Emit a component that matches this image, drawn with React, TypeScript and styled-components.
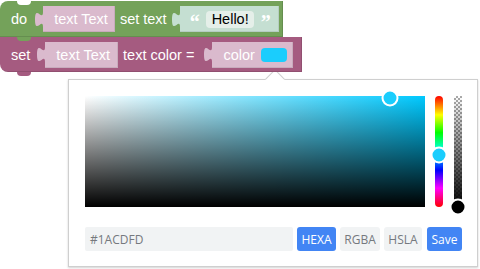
import React from 'react';
import styled, { createGlobalStyle } from 'styled-components';

const Global = createGlobalStyle`
  html, body { margin: 0; padding: 0; background: #fff; }
  body { font-family: "Liberation Sans", Arial, sans-serif; }
`;

const Page = styled.div`
  width: 480px;
  height: 269px;
  overflow: hidden;
  padding-top: 1px;
  box-sizing: border-box;
  display: flex;
  flex-direction: column;
  align-items: flex-start;
`;

const Block = styled.div<{ $bg: string; $w: number; $h: number; $top?: boolean; $z: number }>`
  position: relative;
  z-index: ${p => p.$z};
  display: flex;
  align-items: center;
  box-sizing: border-box;
  width: ${p => p.$w}px;
  height: ${p => p.$h}px;
  padding-left: 11px;
  background: ${p => p.$bg};
  border-radius: ${p => (p.$top ? '8px 0 0 0' : '0 0 0 8px')};
  box-shadow: inset -1px -1px 0 rgba(0, 0, 0, 0.12);
  &::before {
    content: '';
    display: ${p => (p.$top ? 'block' : 'none')};
    position: absolute;
    top: 0;
    left: 17px;
    width: 14px;
    height: 4px;
    background: #fff;
    border-radius: 0 0 6px 6px;
  }
  &::after {
    content: '';
    position: absolute;
    bottom: -4px;
    left: 17px;
    width: 14px;
    height: 4px;
    background: ${p => p.$bg};
    border-radius: 0 0 6px 6px;
  }
`;

const Label = styled.span<{ $ml?: number }>`
  margin-left: ${p => p.$ml ?? 0}px;
  color: #fff;
  font-size: 14.5px;
  white-space: pre;
  line-height: 16px;
`;

const Slot = styled.div<{ $ml: number }>`
  display: flex;
  align-items: center;
  margin-left: ${p => p.$ml}px;
`;

const SlotBody = styled.div<{ $bg: string; $pl: number; $pr: number }>`
  display: flex;
  align-items: center;
  height: 26px;
  box-sizing: border-box;
  padding: 0 ${p => p.$pr}px 0 ${p => p.$pl}px;
  background: ${p => p.$bg};
  box-shadow: inset -1px -1px 0 rgba(0, 0, 0, 0.08);
`;

const Quote = styled.span<{ $ml?: number }>`
  margin-left: ${p => p.$ml ?? 0}px;
  color: #fff;
  font-size: 20px;
  font-weight: bold;
  line-height: 16px;
  font-family: "Liberation Serif", serif;
  transform: translateY(3px);
`;

const Field = styled.span`
  margin-left: 6px;
  height: 17px;
  padding: 0 5px 0 6px;
  display: flex;
  align-items: center;
  background: #e5efe9;
  border-radius: 4px;
  color: #000;
  font-size: 14.5px;
`;

const Swatch = styled.span<{ $color: string }>`
  margin-left: 6px;
  width: 26px;
  height: 14px;
  border-radius: 4px;
  background: ${p => p.$color};
`;

const Popover = styled.div`
  position: relative;
  margin: 7px 0 0 68px;
  width: 410px;
  height: 188px;
  box-sizing: border-box;
  padding: 16px 15px 15px 16px;
  background: #fff;
  border: 1px solid #cfcfcf;
  box-shadow: 0 1px 2px rgba(0, 0, 0, 0.18);
  display: flex;
  flex-direction: column;
  font-family: "Open Sans", "Noto Sans", sans-serif;
`;

const Arrow = styled.div`
  position: absolute;
  top: -8px;
  left: 199px;
  width: 13px;
  height: 13px;
  background: #fff;
  border-top: 1px solid #cfcfcf;
  border-left: 1px solid #cfcfcf;
  transform: rotate(45deg);
`;

const PickerRow = styled.div`
  display: flex;
  height: 111px;
`;

const Palette = styled.div<{ $hue: number }>`
  position: relative;
  flex: 1;
  background: linear-gradient(to top, #000, rgba(0, 0, 0, 0)),
    linear-gradient(to right, #fff, hsl(${p => p.$hue}, 100%, 50%));
`;

const HueBar = styled.div`
  position: relative;
  width: 8px;
  margin-left: 10px;
  border-radius: 4px;
  background: linear-gradient(
    to bottom,
    #f00 0%,
    #ff0 17%,
    #0f0 33%,
    #0ff 50%,
    #00f 67%,
    #f0f 83%,
    #f00 100%
  );
`;

const AlphaBar = styled.div`
  position: relative;
  width: 8px;
  margin-left: 11px;
  background: linear-gradient(to bottom, rgba(0, 0, 0, 0), #000),
    conic-gradient(#aaa 25%, #fff 0 50%, #aaa 0 75%, #fff 0) 0 0 / 4px 4px;
`;

const Knob = styled.div<{ $color: string; $size: number }>`
  position: absolute;
  width: ${p => p.$size}px;
  height: ${p => p.$size}px;
  box-sizing: border-box;
  border-radius: 50%;
  border: 2px solid #fff;
  background: ${p => p.$color};
  transform: translate(-50%, -50%);
`;

const ControlRow = styled.div`
  display: flex;
  align-items: stretch;
  height: 24px;
  margin-top: 20px;
`;

const ResultInput = styled.div`
  flex: 1;
  display: flex;
  align-items: center;
  padding-left: 5px;
  background: #f1f3f4;
  border-radius: 2px;
  color: #75797e;
  font-size: 12px;
`;

const Btn = styled.div<{ $active?: boolean; $w: number; $ml: number }>`
  width: ${p => p.$w}px;
  margin-left: ${p => p.$ml}px;
  display: flex;
  align-items: center;
  justify-content: center;
  border-radius: 3px;
  font-size: 12px;
  background: ${p => (p.$active ? '#4285f4' : '#f1f3f4')};
  color: ${p => (p.$active ? '#fff' : '#75797e')};
`;

const Tab = ({ fill }: { fill: string }) => (
  <svg width="8" height="15" viewBox="0 0 8 15" style={{ display: 'block' }}>
    <path d="M8,0 C8,10 0,-8 0,7.5 C0,23 8,5 8,15 Z" fill={fill} />
  </svg>
);

const GREEN = '#74a25a';
const PINK = '#a55b80';
const LIGHT_PINK = '#dabacd';
const LIGHT_GREEN = '#c5dfd2';
const COLOR = '#1ACDFD';

// HSV of the current colour
const r = 0x1a / 255, g = 0xcd / 255, b = 0xfd / 255;
const max = Math.max(r, g, b), min = Math.min(r, g, b);
const hue = 60 * (4 + (r - g) / (max - min));
const sat = (max - min) / max;
const val = max;

export default function App() {
  return (
    <>
      <Global />
      <Page>
        <Block $bg={GREEN} $w={283} $h={36} $top $z={2}>
          <Label>do</Label>
          <Slot $ml={8}>
            <Tab fill={LIGHT_PINK} />
            <SlotBody $bg={LIGHT_PINK} $pl={11} $pr={7}>
              <Label>text Text</Label>
            </SlotBody>
          </Slot>
          <Label $ml={5}>set text</Label>
          <Slot $ml={5}>
            <Tab fill={LIGHT_GREEN} />
            <SlotBody $bg={LIGHT_GREEN} $pl={10} $pr={8}>
              <Quote>“</Quote>
              <Field>Hello!</Field>
              <Quote $ml={7}>”</Quote>
            </SlotBody>
          </Slot>
        </Block>
        <Block $bg={PINK} $w={302} $h={35} $z={1}>
          <Label>set</Label>
          <Slot $ml={7}>
            <Tab fill={LIGHT_PINK} />
            <SlotBody $bg={LIGHT_PINK} $pl={11} $pr={8}>
              <Label>text Text</Label>
            </SlotBody>
          </Slot>
          <Label $ml={5}>text color =</Label>
          <Slot $ml={10}>
            <Tab fill={LIGHT_PINK} />
            <SlotBody $bg={LIGHT_PINK} $pl={11} $pr={6}>
              <Label>color</Label>
              <Swatch $color={COLOR} />
            </SlotBody>
          </Slot>
        </Block>
        <Popover>
          <Arrow />
          <PickerRow>
            <Palette $hue={hue}>
              <Knob $color={COLOR} $size={17} style={{ left: `${sat * 100}%`, top: `${(1 - val) * 100 + 0.9}%` }} />
            </Palette>
            <HueBar>
              <Knob $color={COLOR} $size={17} style={{ left: '50%', top: `${(hue / 360) * 100}%` }} />
            </HueBar>
            <AlphaBar>
              <Knob $color="#000" $size={17} style={{ left: '50%', top: '100%' }} />
            </AlphaBar>
          </PickerRow>
          <ControlRow>
            <ResultInput>#1ACDFD</ResultInput>
            <Btn $active $w={39} $ml={4}>HEXA</Btn>
            <Btn $w={40} $ml={4}>RGBA</Btn>
            <Btn $w={38} $ml={4}>HSLA</Btn>
            <Btn $active $w={35} $ml={5}>Save</Btn>
          </ControlRow>
        </Popover>
      </Page>
    </>
  );
}
